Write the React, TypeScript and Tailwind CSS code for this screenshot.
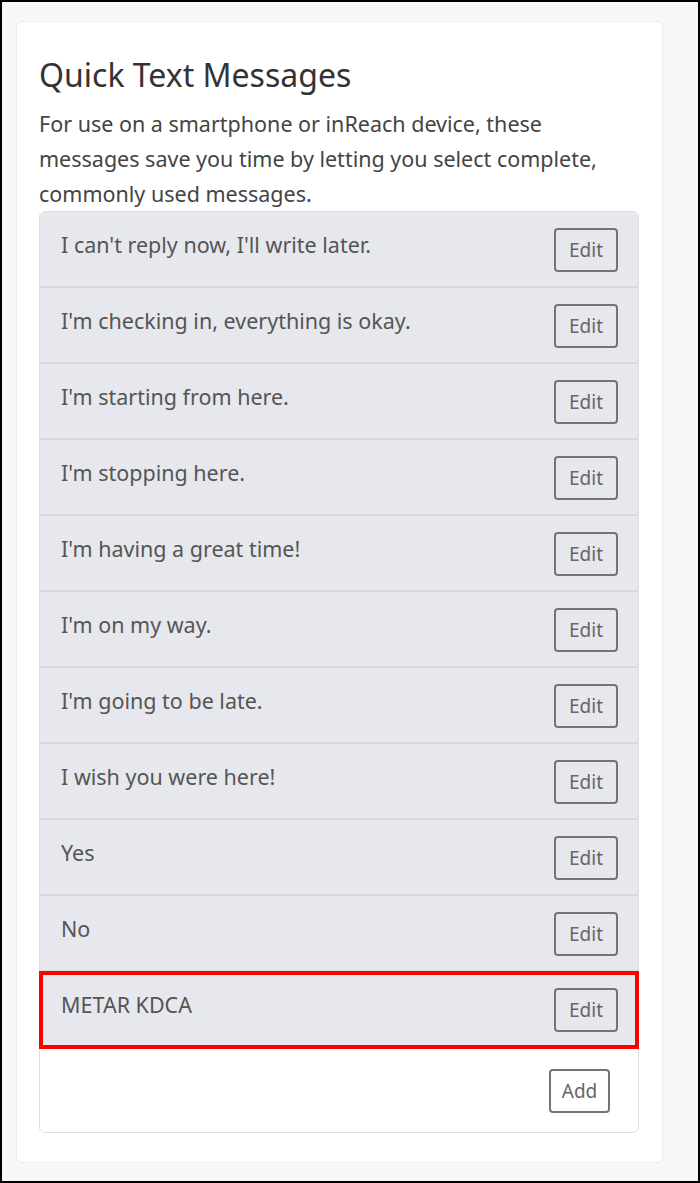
const messages = [
  "I can't reply now, I'll write later.",
  "I'm checking in, everything is okay.",
  "I'm starting from here.",
  "I'm stopping here.",
  "I'm having a great time!",
  "I'm on my way.",
  "I'm going to be late.",
  "I wish you were here!",
  "Yes",
  "No",
  "METAR KDCA",
]

export default function App() {
  return (
    <div className="h-[1183px] w-[700px] border-2 border-black bg-[#f8f8fb] pl-[14px] pt-[19px] font-['Noto_Sans',sans-serif]">
      <div className="w-[647px] rounded-md border border-[#ebebf0] bg-white px-[22px] pb-[29px] pt-[34px]">
        <h2 className="text-[32px] leading-[38px] font-normal text-[#333]">Quick Text Messages</h2>
        <p className="mt-[12px] w-[578px] text-[21.5px] leading-[35px] text-[#444]">
          For use on a smartphone or inReach device, these messages save you time by letting you select complete,
          commonly used messages.
        </p>

        <div className="w-[600px] rounded-md border border-[#dcdde2]">
          {messages.map((msg, i) => {
            const highlighted = i === messages.length - 1
            return (
              <div
                key={i}
                className={`flex h-[76px] items-start justify-between border-b-2 border-[#d8dadf] bg-[#e6e8ed] pl-[21px] pr-[20px] ${
                  i === 0 ? "rounded-t-[5px]" : ""
                } ${highlighted ? "relative z-10 outline-4 outline-offset-[-3px] outline-[#ff0000]" : ""}`}
              >
                <span className="pt-[18px] text-[21.5px] leading-[30px] text-[#555]">{msg}</span>
                <button className="mt-[16px] h-[44px] w-[64px] rounded border-2 border-[#747474] text-[19px] text-[#666]">
                  Edit
                </button>
              </div>
            )
          })}
          <div className="flex h-[84px] items-start justify-end rounded-b-md bg-white pr-[28px] pt-[21px]">
            <button className="h-[44px] w-[61px] rounded border-2 border-[#747474] bg-white text-[19px] text-[#666]">
              Add
            </button>
          </div>
        </div>
      </div>
    </div>
  )
}
